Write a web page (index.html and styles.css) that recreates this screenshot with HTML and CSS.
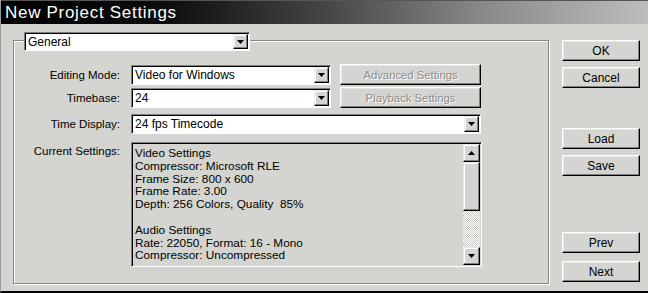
FILE: index.html
```html
<!DOCTYPE html>
<html lang="en">
<head>
    <meta charset="UTF-8">
    <title>New Project Settings</title>
    <link rel="stylesheet" href="styles.css">
</head>
<body>
    <main id="window">
        <header id="titlebar">New Project Settings</header>
        <section id="content">
            <section id="group">
                <div class="select general">
                    <span class="value">General</span>
                    <span class="arrowbtn"><svg width="7" height="4" viewBox="0 0 7 4"><path d="M0 0h7L3.5 4z" fill="#000"/></svg></span>
                </div>
                <div class="row first">
                    <label class="lbl">Editing Mode:</label>
                    <div class="select short">
                        <span class="value">Video for Windows</span>
                        <span class="arrowbtn"><svg width="7" height="4" viewBox="0 0 7 4"><path d="M0 0h7L3.5 4z" fill="#000"/></svg></span>
                    </div>
                    <button class="but disabled wide" type="button">Advanced Settings</button>
                </div>
                <div class="row">
                    <label class="lbl">Timebase:</label>
                    <div class="select short">
                        <span class="value">24</span>
                        <span class="arrowbtn"><svg width="7" height="4" viewBox="0 0 7 4"><path d="M0 0h7L3.5 4z" fill="#000"/></svg></span>
                    </div>
                    <button class="but disabled wide" type="button">Playback Settings</button>
                </div>
                <div class="row third">
                    <label class="lbl">Time Display:</label>
                    <div class="select long">
                        <span class="value">24 fps Timecode</span>
                        <span class="arrowbtn"><svg width="7" height="4" viewBox="0 0 7 4"><path d="M0 0h7L3.5 4z" fill="#000"/></svg></span>
                    </div>
                </div>
                <div class="row fourth">
                    <label class="lbl top">Current Settings:</label>
                    <div id="settings">
                        <div id="settingstext">
                            Video Settings<br>
                            Compressor: Microsoft RLE<br>
                            Frame Size: 800 x 600<br>
                            Frame Rate: 3.00<br>
                            Depth: 256 Colors, Quality&nbsp; 85%<br>
                            <br>
                            Audio Settings<br>
                            Rate: 22050, Format: 16 - Mono<br>
                            Compressor: Uncompressed
                        </div>
                        <div id="scrollbar">
                            <span class="arrowbtn sq"><svg width="7" height="4" viewBox="0 0 7 4"><path d="M0 4h7L3.5 0z" fill="#000"/></svg></span>
                            <span id="thumb"></span>
                            <span id="track"></span>
                            <span class="arrowbtn sq"><svg width="7" height="4" viewBox="0 0 7 4"><path d="M0 0h7L3.5 4z" fill="#000"/></svg></span>
                        </div>
                    </div>
                </div>
            </section>
            <section id="side">
                <button class="but side" type="button">OK</button>
                <button class="but side" type="button">Cancel</button>
                <button class="but side load" type="button">Load</button>
                <button class="but side" type="button">Save</button>
                <button class="but side prev" type="button">Prev</button>
                <button class="but side next" type="button">Next</button>
            </section>
        </section>
    </main>
</body>
</html>
```

FILE: styles.css
```css
body{
    margin: 0;
    padding: 0;
    background-color: #d4d5d1;
}

#window{
    width: 648px;
    height: 293px;
    box-sizing: border-box;
    border-left: 1px solid #9a9a98;
    border-bottom: 2px solid #000;
    background-color: #d4d5d1;
    font-family: "Liberation Sans", Arial, sans-serif;
    font-size: 11px;
    color: #000;
    overflow: hidden;
}

#titlebar{
    height: 24px;
    line-height: 24px;
    padding-left: 4px;
    box-sizing: border-box;
    border-top: 1px solid #555;
    font-size: 17px;
    letter-spacing: 0.7px;
    color: #fff;
    background: linear-gradient(to right, #000 0%, #0c0c0c 25%, #454545 50%, #8a8a8a 75%, #bdbdbd 100%);
}

#content{
    display: flex;
    padding-left: 12px;
}

#group{
    margin-top: 16px;
    width: 536px;
    height: 244px;
    box-sizing: border-box;
    border: 1px solid #858585;
    box-shadow: inset 1px 1px #fff, 1px 1px #fff;
}

.select{
    display: flex;
    height: 20px;
    box-sizing: border-box;
    border: 1px solid;
    border-color: #808080 #fff #fff #808080;
    box-shadow: inset 1px 1px #000;
    background-color: #fff;
    padding: 1px 1px 1px 2px;
}

.value{
    flex: 1;
    line-height: 17px;
    padding-left: 1px;
    font-size: 12px;
}

.arrowbtn{
    width: 15px;
    height: 16px;
    box-sizing: border-box;
    display: flex;
    justify-content: center;
    align-items: center;
    border: 1px solid;
    border-color: #e8e8e6 #000 #000 #e8e8e6;
    box-shadow: inset -1px -1px #808080, inset 1px 1px #fff;
    background-color: #d4d5d1;
}

.general{
    width: 226px;
    height: 19px;
    margin-top: -9px;
    margin-left: 10px;
}

.general .arrowbtn{
    height: 15px;
}

.row{
    display: flex;
    align-items: center;
    margin-top: 2px;
}

.row.first{
    margin-top: 13px;
}

.row.third{
    margin-top: 6px;
}

.row.fourth{
    margin-top: 8px;
    align-items: flex-start;
}

.lbl{
    width: 106px;
    margin-right: 11px;
    text-align: right;
    font-size: 11.5px;
}

.lbl.top{
    padding-top: 3px;
    line-height: 13px;
}

.short{
    width: 200px;
}

.long{
    width: 350px;
}

.but{
    height: 21px;
    padding: 0;
    box-sizing: border-box;
    border: 1px solid;
    border-color: #fff #000 #000 #fff;
    box-shadow: inset -1px -1px #808080, inset 1px 1px #e6e6e4;
    background-color: #d4d5d1;
    font-family: "Liberation Sans", Arial, sans-serif;
    font-size: 12px;
    color: #000;
}

.wide{
    width: 141px;
    margin-left: 9px;
    font-size: 11.3px;
}

.disabled{
    color: #8c8c8a;
    text-shadow: 1px 1px #fff;
}

#settings{
    display: flex;
    width: 351px;
    height: 125px;
    box-sizing: border-box;
    border: 1px solid;
    border-color: #808080 #fff #fff #808080;
    box-shadow: inset 1px 1px #000;
    padding: 1px 1px 1px 2px;
}

#settingstext{
    flex: 1;
    padding-top: 3px;
    padding-left: 1px;
    line-height: 12.8px;
    font-size: 11.8px;
    overflow: hidden;
}

#scrollbar{
    width: 17px;
    display: flex;
    flex-direction: column;
}

.sq{
    width: 17px;
    height: 18px;
}

#thumb{
    height: 49px;
    box-sizing: border-box;
    border: 1px solid;
    border-color: #e8e8e6 #000 #000 #e8e8e6;
    box-shadow: inset -1px -1px #808080, inset 1px 1px #fff;
    background-color: #d4d5d1;
}

#track{
    flex: 1;
    background: repeating-conic-gradient(#fff 0 25%, #c8c9c5 0 50%) 0 0 / 2px 2px;
}

#side{
    display: flex;
    flex-direction: column;
    margin-left: 13px;
    margin-top: 16px;
    gap: 6px;
}

.side{
    width: 78px;
}

.load{
    margin-top: 34px;
}

.prev{
    margin-top: 50px;
}

.next{
    margin-top: 2px;
}
```
